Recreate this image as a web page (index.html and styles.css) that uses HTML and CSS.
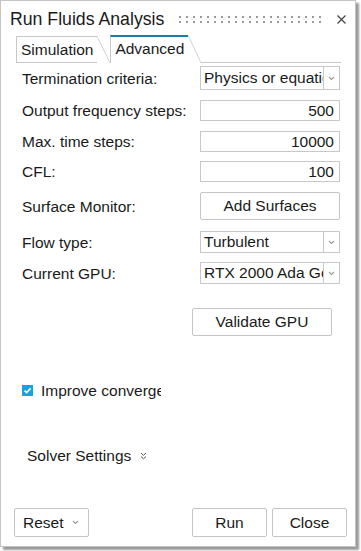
FILE: index.html
```html
<html>

<head>
	<title>Run Fluids Analysis</title>
	<link rel="stylesheet" href="styles.css">
</head>

<body>
	<div class="dialog">
		<div class="titlebar">
			<span class="title">Run Fluids Analysis</span>
			<span class="grip"></span>
			<svg class="close" width="9" height="9" viewBox="0 0 9 9">
				<path d="M0.5 0.5 L8.5 8.5 M8.5 0.5 L0.5 8.5" stroke="#444" stroke-width="1.2" fill="none" />
			</svg>
		</div>

		<div class="tabs">
			<div class="tab">Simulation</div>
			<div class="tab active">Advanced</div>
			<div class="tab-rest"></div>
		</div>

		<div class="form">
			<div class="row r1">
				<span class="label">Termination criteria:</span>
				<div class="select tall">
					<span class="value">Physics or equation</span>
					<span class="arrow"><svg width="7" height="5" viewBox="0 0 7 5"><path d="M1 1 L3.5 3.5 L6 1" stroke="#9a9a9a" stroke-width="1.1" fill="none" /></svg></span>
				</div>
			</div>
			<div class="row r2">
				<span class="label">Output frequency steps:</span>
				<div class="input">500</div>
			</div>
			<div class="row r3">
				<span class="label">Max. time steps:</span>
				<div class="input">10000</div>
			</div>
			<div class="row r4">
				<span class="label">CFL:</span>
				<div class="input">100</div>
			</div>
			<div class="row r5">
				<span class="label">Surface Monitor:</span>
				<button class="btn field-btn">Add Surfaces</button>
			</div>
			<div class="row r6">
				<span class="label">Flow type:</span>
				<div class="select">
					<span class="value">Turbulent</span>
					<span class="arrow"><svg width="7" height="5" viewBox="0 0 7 5"><path d="M1 1 L3.5 3.5 L6 1" stroke="#9a9a9a" stroke-width="1.1" fill="none" /></svg></span>
				</div>
			</div>
			<div class="row r7">
				<span class="label">Current GPU:</span>
				<div class="select">
					<span class="value">RTX 2000 Ada Generation</span>
					<span class="arrow"><svg width="7" height="5" viewBox="0 0 7 5"><path d="M1 1 L3.5 3.5 L6 1" stroke="#9a9a9a" stroke-width="1.1" fill="none" /></svg></span>
				</div>
			</div>
			<div class="row r8">
				<button class="btn validate">Validate GPU</button>
			</div>

			<div class="check-row">
				<span class="checkbox">
					<svg width="11" height="11" viewBox="0 0 11 11"><path d="M2.5 5.6 L4.6 7.6 L8.6 3.4" stroke="#fff" stroke-width="1.6" fill="none" /></svg>
				</span>
				<span class="check-label">Improve convergence</span>
			</div>

			<div class="section">
				<span>Solver Settings</span>
				<svg width="7" height="8" viewBox="0 0 7 8">
					<path d="M1 1 L3.5 3.3 L6 1 M1 4.5 L3.5 6.8 L6 4.5" stroke="#555" stroke-width="1" fill="none" />
				</svg>
			</div>
		</div>

		<div class="footer">
			<button class="btn reset">Reset
				<svg width="7" height="5" viewBox="0 0 7 5"><path d="M1 1 L3.5 3.5 L6 1" stroke="#9a9a9a" stroke-width="1.1" fill="none" /></svg>
			</button>
			<span class="spacer"></span>
			<button class="btn action">Run</button>
			<button class="btn action">Close</button>
		</div>
	</div>
</body>

</html>
```

FILE: styles.css
```css
* {
	box-sizing: border-box;
	margin: 0;
	padding: 0;
}

body {
	background: white;
	font-family: "Liberation Sans", Arial, sans-serif;
	color: #1a1a1a;
}

.dialog {
	width: 356px;
	height: 547px;
	border: 1px solid #c4c4c4;
	background: white;
	box-shadow: 3px 3px 2px rgba(0, 0, 0, 0.4);
	display: flex;
	flex-direction: column;
}

.titlebar {
	height: 34px;
	display: flex;
	align-items: center;
	padding: 3px 0 0 9px;
}

.title {
	font-size: 17.7px;
}

.grip {
	width: 146px;
	height: 7px;
	margin-left: 15px;
	background-image: linear-gradient(to right, #9a9a9a 2px, transparent 2px), linear-gradient(to right, #9a9a9a 2px, transparent 2px);
	background-size: 7px 2px, 7px 2px;
	background-position: 0 0, 0 5px;
	background-repeat: repeat-x;
}

.close {
	margin-left: 12px;
}

.tabs {
	height: 28px;
	display: flex;
	align-items: flex-end;
	padding-left: 15px;
	font-size: 15.5px;
}

.tab {
	position: relative;
	height: 27px;
	padding: 4px 4px 0 4px;
	border-top: 1px solid #c8c8c8;
	border-left: 1px solid #c8c8c8;
	border-bottom: 1px solid #c8c8c8;
	margin-right: 13px;
}

.tab::after {
	content: '';
	position: absolute;
	top: -1px;
	right: -13px;
	width: 13px;
	height: 27px;
	background: linear-gradient(to top right, transparent calc(50% - 0.7px), #c8c8c8 50%, transparent calc(50% + 0.7px));
}

.tab.active {
	height: 28px;
	border-top: 2px solid #1a7ea6;
	border-bottom: none;
	padding-top: 3px;
	margin-right: 0;
}

.tab.active::after {
	top: -2px;
	height: 28px;
}

.tab-rest {
	flex: 1;
	margin-left: 13px;
	margin-right: 14px;
	border-bottom: 1px solid #c8c8c8;
}

.form {
	display: flex;
	flex-direction: column;
	padding: 3px 0 0 21px;
	font-size: 15.5px;
}

.row {
	display: flex;
	align-items: center;
}

.label {
	width: 178px;
	padding-top: 1px;
}

.r2,
.r3,
.r5 {
	margin-top: 10px;
}

.r4,
.r7 {
	margin-top: 9px;
}

.r6 {
	margin-top: 11px;
}

.r8 {
	margin-top: 24px;
	padding-left: 170px;
}

.input {
	width: 140px;
	height: 21px;
	border: 1px solid #c8c8c8;
	text-align: right;
	padding-right: 5px;
	line-height: 19px;
}

.select {
	width: 140px;
	height: 22px;
	border: 1px solid #c8c8c8;
	display: flex;
}

.select.tall {
	height: 24px;
}

.select .value {
	flex: 1;
	overflow: hidden;
	white-space: nowrap;
	padding-left: 3px;
	display: flex;
	align-items: center;
}

.select .arrow {
	width: 16px;
	border-left: 1px solid #c8c8c8;
	display: flex;
	align-items: center;
	justify-content: center;
}

.btn {
	font-family: "Liberation Sans", Arial, sans-serif;
	font-size: 15.5px;
	color: #1a1a1a;
	background: white;
	border: 1px solid #c4c4c4;
	border-radius: 2px;
	height: 28px;
}

.field-btn {
	width: 140px;
}

.validate {
	width: 140px;
}

.check-row {
	display: flex;
	align-items: center;
	height: 20px;
	margin-top: 44px;
}

.checkbox {
	width: 11px;
	height: 11px;
	background: #1ba1e2;
	display: flex;
}

.check-label {
	width: 120px;
	margin-left: 8px;
	padding-top: 1px;
	overflow: hidden;
	white-space: nowrap;
}

.section {
	display: flex;
	align-items: center;
	gap: 9px;
	height: 20px;
	margin-top: 46px;
	padding-left: 5px;
}

.footer {
	margin-top: auto;
	display: flex;
	align-items: center;
	gap: 5px;
	padding: 0 8px 9px 13px;
}

.reset {
	width: 75px;
	height: 29px;
	display: flex;
	align-items: center;
	gap: 8px;
	padding-left: 8px;
}

.spacer {
	flex: 1;
}

.action {
	width: 75px;
	height: 29px;
}
```
